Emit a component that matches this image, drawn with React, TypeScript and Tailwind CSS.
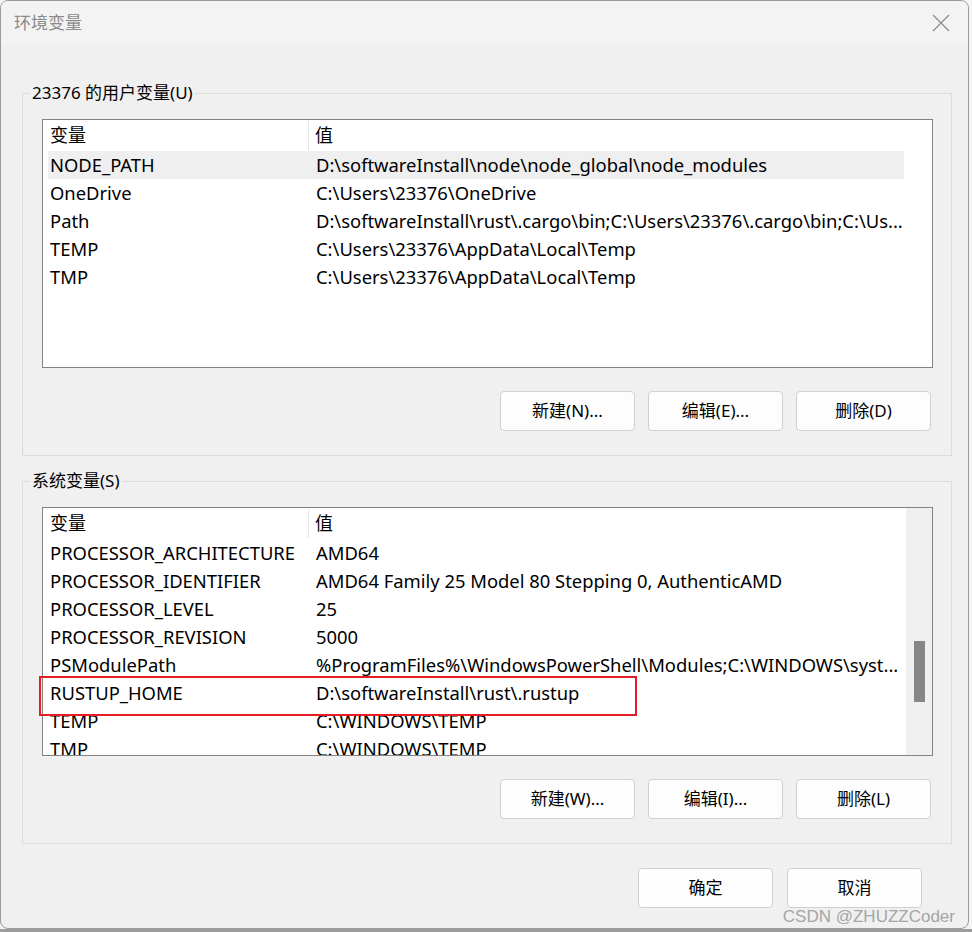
import React from 'react';

const FONT = "font-['Noto_Sans','Noto_Sans_CJK_SC',sans-serif]";

type Row = { name: string; value: string; selected?: boolean };

const USER_VARS: Row[] = [
  { name: 'NODE_PATH', value: 'D:\\softwareInstall\\node\\node_global\\node_modules', selected: true },
  { name: 'OneDrive', value: 'C:\\Users\\23376\\OneDrive' },
  { name: 'Path', value: 'D:\\softwareInstall\\rust\\.cargo\\bin;C:\\Users\\23376\\.cargo\\bin;C:\\Us...' },
  { name: 'TEMP', value: 'C:\\Users\\23376\\AppData\\Local\\Temp' },
  { name: 'TMP', value: 'C:\\Users\\23376\\AppData\\Local\\Temp' },
];

const SYS_VARS: Row[] = [
  { name: 'PROCESSOR_ARCHITECTURE', value: 'AMD64' },
  { name: 'PROCESSOR_IDENTIFIER', value: 'AMD64 Family 25 Model 80 Stepping 0, AuthenticAMD' },
  { name: 'PROCESSOR_LEVEL', value: '25' },
  { name: 'PROCESSOR_REVISION', value: '5000' },
  { name: 'PSModulePath', value: '%ProgramFiles%\\WindowsPowerShell\\Modules;C:\\WINDOWS\\syst...' },
  { name: 'RUSTUP_HOME', value: 'D:\\softwareInstall\\rust\\.rustup' },
  { name: 'TEMP', value: 'C:\\WINDOWS\\TEMP' },
  { name: 'TMP', value: 'C:\\WINDOWS\\TEMP' },
];

const WinButton = ({ label }: { label: string }) => (
  <button className="w-[135px] h-[40px] bg-[#fdfdfd] border border-[#d0d0d0] rounded-[4px] text-[17px] text-black flex items-center justify-center">
    {label}
  </button>
);

const ListView = ({ rows, scrollbar, highlight }: { rows: Row[]; scrollbar?: boolean; highlight?: boolean }) => (
  <div className="relative w-[891px] h-[249px] border border-[#838383] bg-white">
    <div className="flex h-full overflow-hidden">
      <div className="w-[861px] flex flex-col">
        {/* header */}
        <div className="flex h-[31px] shrink-0 items-center text-[18px] text-black">
          <div className="w-[266px] h-[29px] flex items-center pl-[7px] border-r border-[#e5e5e5]">变量</div>
          <div className="flex-1 pl-[6px]">值</div>
        </div>
        {rows.map((r, i) => (
          <div
            key={i}
            className={`flex h-[28px] shrink-0 items-center ml-[5px] text-[18.4px] text-black whitespace-nowrap ${
              r.selected ? 'bg-[#efefef]' : ''
            }`}
          >
            <div className="w-[261px] pl-[2px] overflow-hidden">{r.name}</div>
            <div className="flex-1 pl-[7px] overflow-hidden">{r.value}</div>
          </div>
        ))}
      </div>
      {scrollbar ? (
        <div className="w-[26px] ml-[2px] h-full bg-[#f0f0f0] flex flex-col items-center pt-[133px]">
          <div className="w-[11px] h-[61px] bg-[#868686]" />
        </div>
      ) : null}
    </div>
    {highlight ? (
      <div className="absolute left-[-4px] top-[168px] w-[598px] h-[40px] border-2 border-[#e81c25]" />
    ) : null}
  </div>
);

const GroupBox = ({
  title,
  rows,
  buttons,
  scrollbar,
  highlight,
  className,
}: {
  title: string;
  rows: Row[];
  buttons: string[];
  scrollbar?: boolean;
  highlight?: boolean;
  className?: string;
}) => (
  <fieldset className={`w-[930px] ml-[21px] border border-[#dcdcdc] pl-[19px] pr-[18px] pb-[24px] ${className ?? ''}`}>
    <legend className="ml-[-12px] px-[2px] text-[17px] leading-[20px] text-black">{title}</legend>
    <div className="pt-[16px]">
      <ListView rows={rows} scrollbar={scrollbar} highlight={highlight} />
    </div>
    <div className="flex justify-end gap-[13px] pr-[2px] mt-[23px]">
      {buttons.map(b => (
        <WinButton key={b} label={b} />
      ))}
    </div>
  </fieldset>
);

export default function App() {
  return (
    <div className={`relative w-[972px] h-[932px] bg-[#f4f4f4] overflow-hidden ${FONT}`}>
      <div className="w-[969px] h-[929px] border border-[#9a9a9a] rounded-[8px] bg-[#f0f0f0] overflow-hidden flex flex-col">
        {/* title bar */}
        <div className="h-[44px] shrink-0 bg-[#f3f3f3] flex items-center justify-between pl-[13px] pr-[16px]">
          <span className="text-[17px] text-[#8b8b8b]">环境变量</span>
          <svg width="18" height="18" viewBox="0 0 18 18" className="mr-[2px]">
            <path d="M1 1 L17 17 M17 1 L1 17" stroke="#8a8a8a" strokeWidth="1.2" fill="none" />
          </svg>
        </div>

        <GroupBox
          className="mt-[38px]"
          title="23376 的用户变量(U)"
          rows={USER_VARS}
          buttons={['新建(N)...', '编辑(E)...', '删除(D)']}
        />
        <GroupBox
          className="mt-[15px]"
          title="系统变量(S)"
          rows={SYS_VARS}
          buttons={['新建(W)...', '编辑(I)...', '删除(L)']}
          scrollbar
          highlight
        />

        <div className="flex justify-end gap-[14px] pr-[46px] mt-[24px]">
          <WinButton label="确定" />
          <WinButton label="取消" />
        </div>
      </div>

      {/* taskbar sliver */}
      <div className="absolute left-0 bottom-0 w-full h-[3px] bg-[#9c9c9c]" />

      {/* watermark */}
      <div className="absolute right-[17px] bottom-[4px] text-[17px] leading-[22px] text-[#a5a5a5] font-['Liberation_Sans',sans-serif]">
        CSDN @ZHUZZCoder
      </div>
    </div>
  );
}
